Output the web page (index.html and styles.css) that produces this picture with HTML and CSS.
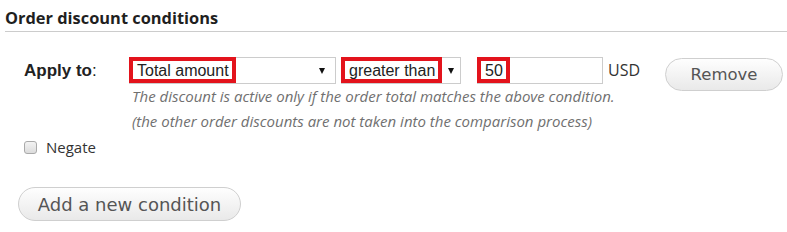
FILE: index.html
```html
<!DOCTYPE html>
<html lang="en">
<head>
  <meta charset="UTF-8">
  <title>Order discount conditions</title>
  <link rel="stylesheet" href="styles.css">
</head>
<body>
  <div class="section">
    <h2 class="section-title">Order discount conditions</h2>

    <div class="condition">
      <div class="apply-label"><b>Apply to</b>:</div>
      <div class="condition-fields">
        <div class="field-line">
          <div class="fake-select select-subject">
            <span class="marked">Total amount</span>
            <span class="arrow"></span>
          </div>
          <div class="fake-select select-operator">
            <span class="marked">greater than</span>
            <span class="arrow"></span>
          </div>
          <div class="fake-input">
            <span class="marked">50</span>
          </div>
          <span class="currency">USD</span>
        </div>
        <div class="description">
          <p>The discount is active only if the order total matches the above condition.</p>
          <p>(the other order discounts are not taken into the comparison process)</p>
        </div>
      </div>
      <button class="btn btn-remove">Remove</button>
    </div>

    <label class="negate"><span class="checkbox"></span>Negate</label>

    <button class="btn btn-add">Add a new condition</button>
  </div>
</body>
</html>
```

FILE: styles.css
```css
body {
  margin: 0;
  font-family: "Open Sans", sans-serif;
  color: #333;
  background: #fff;
}
.section {
  padding-left: 5px;
}
.section-title {
  margin: 0;
  padding: 7px 0 2px;
  font-size: 16.4px;
  line-height: 22px;
  font-weight: 700;
  color: #1f1f1f;
  border-bottom: 1px solid #ccc;
}
.condition {
  display: flex;
  align-items: flex-start;
  margin-top: 25px;
  padding-left: 19px;
}
.apply-label {
  width: 105px;
  font-family: "Liberation Sans", Arial, sans-serif;
  font-size: 17px;
  line-height: 27px;
  color: #222;
}
.apply-label b {
  font-weight: 700;
}
.field-line {
  display: flex;
  align-items: flex-start;
}
.fake-select, .fake-input {
  display: flex;
  justify-content: space-between;
  align-items: center;
  box-sizing: border-box;
  height: 27px;
  border: 1px solid #ccc;
  background: #fff;
  font-family: "Liberation Sans", Arial, sans-serif;
  font-size: 16px;
  color: #222;
}
.select-subject {
  width: 207px;
}
.select-operator {
  width: 120px;
  margin-left: 5px;
}
.fake-input {
  width: 126px;
  margin-left: 16px;
}
.marked {
  align-self: flex-start;
  box-sizing: border-box;
  height: 26px;
  margin: -1px 0 0 -1px;
  padding: 1px 3px 0 4px;
  line-height: 18px;
  border: 4px solid #e3131c;
  background: #fff;
}
.arrow {
  width: 0;
  height: 0;
  border-left: 3.5px solid transparent;
  border-right: 3.5px solid transparent;
  border-top: 6px solid #111;
  margin-right: 10px;
}
.select-operator .arrow {
  margin-right: 6px;
}
.currency {
  margin-left: 5px;
  font-size: 16px;
  line-height: 27px;
  color: #333;
}
.description {
  margin-left: 3px;
  font-style: italic;
  font-size: 15px;
  color: #707070;
}
.description p {
  margin: 0;
  line-height: 25px;
}
.btn {
  font-family: "DejaVu Sans", Verdana, sans-serif;
  color: #555;
  background: linear-gradient(#fefefe, #e9e9e9);
  border: 1px solid #cfcfcf;
  border-radius: 20px;
  cursor: pointer;
}
.btn-remove {
  margin: 1px 0 0 25px;
  width: 118px;
  height: 33px;
  font-size: 16.5px;
}
.negate {
  display: flex;
  align-items: center;
  margin: 3px 0 0 19px;
  font-size: 15px;
  color: #333;
}
.checkbox {
  width: 13px;
  height: 13px;
  box-sizing: border-box;
  margin-right: 9px;
  border: 1px solid #aaa;
  border-radius: 3px;
  background: linear-gradient(#f3f3f3, #dcdcdc);
}
.btn-add {
  display: block;
  margin: 30px 0 0 13px;
  width: 223px;
  height: 34px;
  font-size: 18px;
}
```
